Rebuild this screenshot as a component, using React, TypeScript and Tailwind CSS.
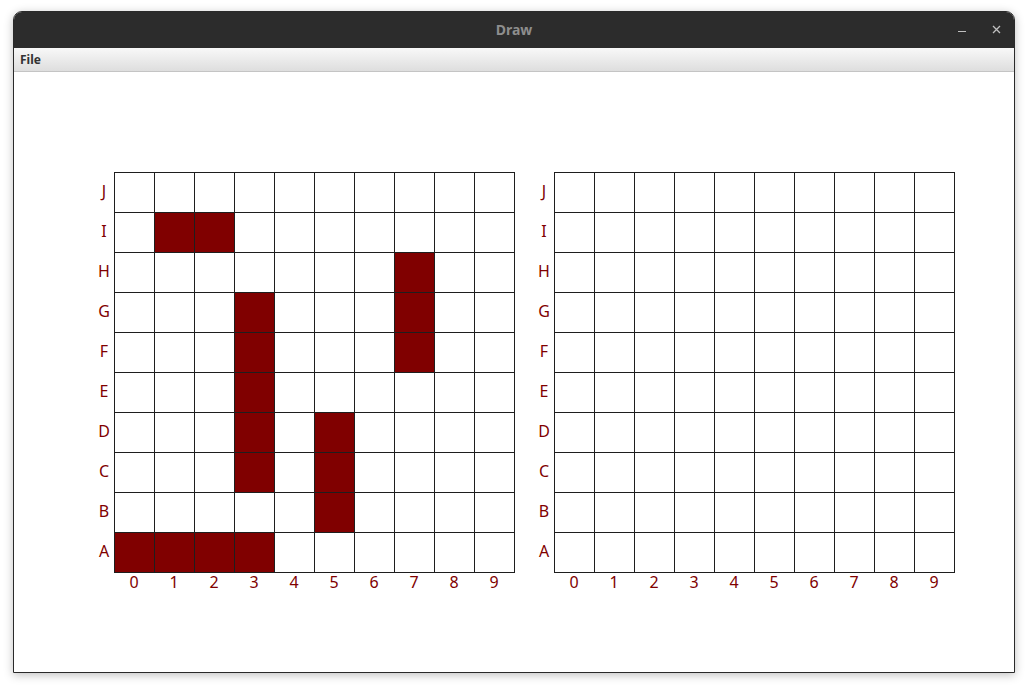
import React from "react";

const letters = ["J", "I", "H", "G", "F", "E", "D", "C", "B", "A"];
const nums = [0, 1, 2, 3, 4, 5, 6, 7, 8, 9];

const filledLeft: Record<string, number[]> = {
  I: [1, 2],
  H: [7],
  G: [3, 7],
  F: [3, 7],
  E: [3],
  D: [3, 5],
  C: [3, 5],
  B: [5],
  A: [0, 1, 2, 3],
};

function Board({ filled }: { filled: Record<string, number[]> }) {
  return (
    <div className="flex flex-col">
      <div className="flex">
        <div className="flex w-[20px] flex-col">
          {letters.map((l) => (
            <div key={l} className="flex h-[40px] items-center justify-center pb-[2px] text-[16px] text-[#800000]">
              {l}
            </div>
          ))}
        </div>
        <div className="grid w-[401px] grid-cols-[repeat(10,40px)] border-l border-t border-[#1e1e1e]">
          {letters.map((l) =>
            nums.map((n) => (
              <div
                key={l + n}
                className={
                  "h-[40px] w-[40px] border-b border-r border-[#1e1e1e] " +
                  ((filled[l] || []).includes(n) ? "bg-[#800000]" : "bg-white")
                }
              />
            ))
          )}
        </div>
      </div>
      <div className="flex pl-[20px]">
        {nums.map((n) => (
          <div key={n} className="flex h-[18px] w-[40px] items-center justify-center text-[16px] text-[#800000]">
            {n}
          </div>
        ))}
      </div>
    </div>
  );
}

export default function App() {
  return (
    <div className="h-[689px] w-[1028px] bg-white pl-[13px] pt-[11px]" style={{ fontFamily: '"Noto Sans", "DejaVu Sans", sans-serif' }}>
      <div className="flex h-[662px] w-[1002px] flex-col overflow-hidden rounded-t-[9px] border border-[#2a2a2a] shadow-[0_2px_10px_rgba(0,0,0,0.25)]">
        <div className="relative flex h-[36px] shrink-0 items-center justify-center bg-[#2c2c2c] pb-[2px]">
          <span className="text-[14px] font-bold text-[#8e8e8e]">Draw</span>
          <span className="absolute left-[944px] top-[19px] h-[1px] w-[8px] bg-[#c0c0c0]" />
          <svg className="absolute left-[978px] top-[13px]" width="9" height="9" viewBox="0 0 9 9">
            <path d="M1 1 L8 8 M8 1 L1 8" stroke="#c0c0c0" strokeWidth="1.3" />
          </svg>
        </div>
        <div className="flex h-[24px] shrink-0 items-center border-b border-[#c4c4c4] bg-gradient-to-b from-[#f8f8f8] to-[#dedede] px-[6px]">
          <span className="text-[12px] font-bold text-[#333]">File</span>
        </div>
        <div className="flex flex-1 bg-white pl-[80px] pt-[100px]">
          <div className="flex gap-[19px]">
            <Board filled={filledLeft} />
            <Board filled={{}} />
          </div>
        </div>
      </div>
    </div>
  );
}
